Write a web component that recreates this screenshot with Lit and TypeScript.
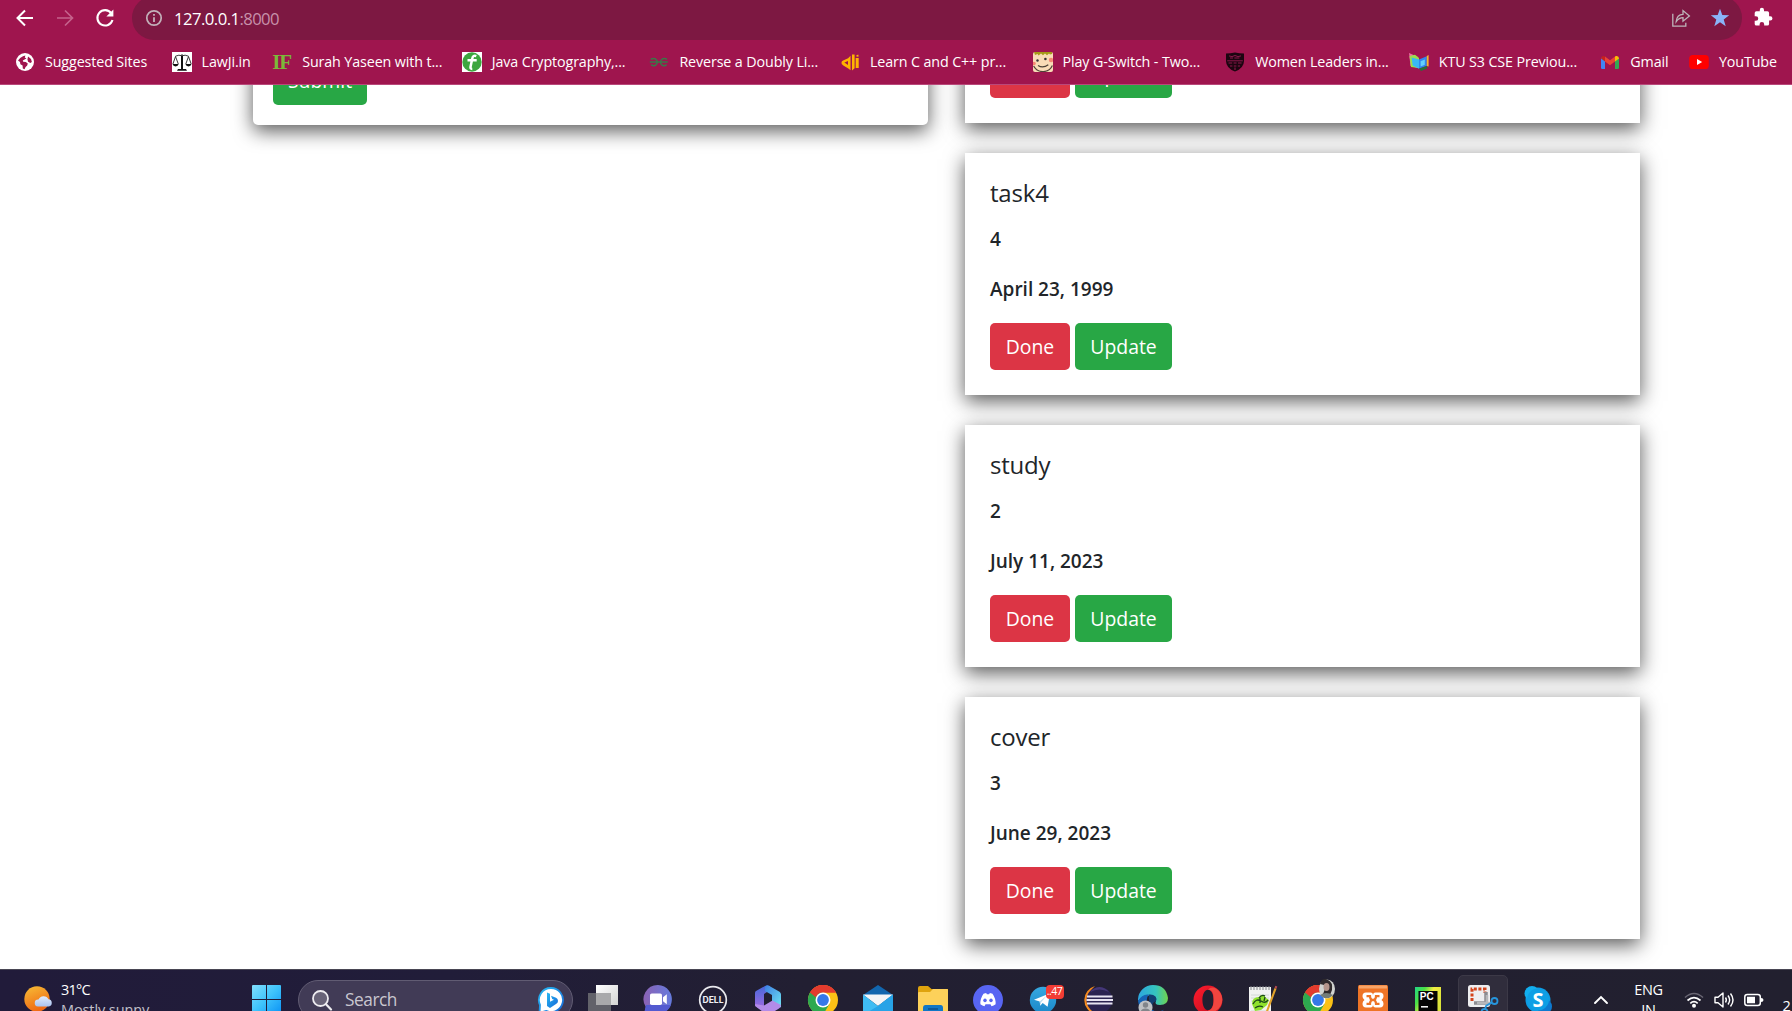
import { LitElement, html, svg, css } from "lit";
import { customElement, property } from "lit/decorators.js";

const icon = (size: number, body: unknown, box = 32) =>
  html`<svg class="icon" width=${size} height=${size} viewBox="0 0 ${box} ${box}" aria-hidden="true">${body}</svg>`;

/* ---------- bookmark favicons, 20 x 20 ---------- */
const globe = svg`<circle cx="10" cy="10" r="9" fill="#fff"/><path d="M3 8.5 5.2 6 8 4.2 10.4 3.6 9.8 5.6 11.4 6.4 9.6 7.6 7.8 8.4 8.2 9.8 10.8 10 12.8 11.4 12.2 13.6 10.4 15.2 9.6 17.2 7.8 16.4 7.6 13.6 5.4 12.2 5 10z" fill="#9f154e"/><path d="m13 4.6 3 2.4.9 3-1.6 1-2.2-1.3-.6-2.1z" fill="#9f154e"/>`;
const scales = svg`<path d="M0 0h20v20H0z" fill="#fff"/><path d="M10 2v15M3.5 4.2Q7 2.4 10 3.8 13 2.4 16.5 4.2M3.5 4.5.9 12M3.5 4.5 6.3 12M16.5 4.5 13.8 12M16.5 4.5 19.2 12" stroke="#222" stroke-width=".9" fill="none"/><path d="M9 4h2v13H9zM.5 12h6.2q-.6 2.4-3.1 2.4T.5 12zM13.4 12h6.1q-.6 2.4-3 2.4T13.4 12zM6 17h8l1 1.8H5z" fill="#111"/>`;
const letterIF = html`<span class="if">IF</span>`;
const greenT = svg`<path d="M0 0h20v20H0z" fill="#fff"/><circle cx="10" cy="10" r="9.7" fill="#3da63f"/><path d="M14.3 4.1q-3.3-1.3-4 2.4L8.5 15q-.3 2 1.8 1.9M5.5 8.2h9.2" stroke="#fff" stroke-width="2.5" fill="none"/>`;
const gfg = svg`<path d="M1.8 7.4q2.2-1.6 4.5-.6 2 1.2 2 3.2t-1.8 3.3q-2.6 1.2-4.3-.8M18 7.4q-2.2-1.6-4.5-.6-2 1.2-2 3.2t1.8 3.3q2.6 1.2 4.3-.8M.8 10h18" stroke="#3a7748" stroke-width="1.5" fill="none"/>`;
const jdoodle = svg`<path d="M10.5 3.8v14.5l-2.2-1.8-5-3Q1 12 1.5 10.3q.2-1 1.6-1.7l5-2.3z" fill="#ffb400"/><path d="m8 9-3.6 1.6L8 13z" fill="#9f154e"/><path d="M12 2.5h2.6v13.8L12 18.5zM15.7 6h3v10h-3zM16.2 3.6l2-1.2.5 2-2 .4z" fill="#ffb400"/>`;
const face = svg`<rect width="20" height="20" rx="2" fill="#f9dcb7"/><path d="M1 0h18v2l-2 .6-1-1-2 1.6L12 1.4l-2 1.8-2-1.6-2.5 2L4.6 2 2 3z" fill="#a59b18"/><circle cx="4.5" cy="8.5" r="1.2" fill="#333"/><circle cx="12.4" cy="7" r="1.3" fill="#333"/><circle cx="18" cy="8" r="2.2" fill="#f58672"/><circle cx="1" cy="11.5" r="1.8" fill="#f58672"/><path d="M5 13.5q5 3.2 10.3-.8M.6 14q3.4 6 10 5.5 6 0 8.8-6" stroke="#4c4237" stroke-width="1.2" fill="none"/>`;
const shield = svg`<path d="M1 1.5Q5.5 1.4 10 .4q4.5 1 9 1.1V9q0 7-9 10.6Q1 16 1 9z" fill="#1c0510"/><path d="M4 3.9q3 1.6 6-.4 3 2 6 .4M5 6h3m1.4 0h5M2.2 8.8h15.6" stroke="#8b174a" stroke-width="1" fill="none"/><path d="M3.5 11h3.7M8.6 11h3M13 11h3.6M5 14h2.4M8.8 14h2.6M12.8 14H15M10 15.5v2.4" stroke="#8b174a" stroke-width="1.1" fill="none"/>`;
const book = svg`<path d="M0 1 9 5v11L1.5 14z" fill="#f06aa8"/><path d="M.5 4 6 2.8 10 6v10l-8-1z" fill="#9ade4c"/><path d="m2.6 5.6 7.4 2v9.2l-6.4-3.2z" fill="#39b8f5"/><path d="m10 7.6 7.8-3.4v9.6L10 16.8z" fill="#3286f0"/><path d="m17.8 4 1.8-1v11.6L17.8 14z" fill="#f7b52c"/><path d="m10 16.6 8-2.6.2 2.6L12 19z" fill="#27713a"/><path d="m11.6 9.2 4.2-1.8v5.4l-4.2 1.8z" fill="#64d1fb"/>`;
const gmail = svg`<path d="M1 5.5v10.2q0 1.3 1.3 1.3H5V8.6z" fill="#4285f4"/><path d="M15 8.6V17h2.7q1.3 0 1.3-1.3V5.5z" fill="#34a853"/><path d="M1 6.7q0-2.5 2.2-2.8Q4.2 3.9 5 4.5v5L1 6.6z" fill="#c5221f"/><path d="M5 4.5 10 8.3l5-3.8v5L10 13.2 5 9.5z" fill="#ea4335"/><path d="m15 4.5 1-.5q2.8-.6 3 2.6l-4 2.9z" fill="#fbbc04"/>`;
const youtube = svg`<rect x=".2" y="3" width="19.6" height="14" rx="3.6" fill="red"/><path d="m8 7 5.2 3L8 13z" fill="#fff"/>`;

interface Bookmark { label: string; width: number; art: unknown; text?: boolean }
const bookmarks: Bookmark[] = [
  { label: "Suggested Sites", width: 106, art: globe },
  { label: "LawJi.in", width: 50, art: scales },
  { label: "Surah Yaseen with t...", width: 139, art: letterIF, text: true },
  { label: "Java Cryptography,...", width: 137, art: greenT },
  { label: "Reverse a Doubly Li...", width: 140, art: gfg },
  { label: "Learn C and C++ pr...", width: 142, art: jdoodle },
  { label: "Play G-Switch - Two...", width: 142, art: face },
  { label: "Women Leaders in...", width: 133, art: shield },
  { label: "KTU S3 CSE Previou...", width: 141, art: book },
  { label: "Gmail", width: 38, art: gmail },
  { label: "YouTube", width: 58, art: youtube },
];

@customElement("browser-bar")
export class BrowserBar extends LitElement {
  static styles = css`
    :host { display: block; background: #9f154e; border-bottom: 1px solid #b9487a; color: #fff; flex: none; height: 84px; overflow: hidden; font-family: "Open Sans", "Noto Sans", sans-serif; }
    .tools { display: flex; align-items: center; height: 44px; margin-top: -4px; }
    .nav { display: flex; align-items: center; gap: 20px; width: 132px; padding-left: 15px; box-sizing: border-box; flex: none; padding-bottom: 4px; margin-top: 4px;}
    .pill { flex: 1; display: flex; align-items: center; height: 44px; border-radius: 22px; background: #7d1842; padding: 0 12px; box-sizing: border-box; }
    .url { margin-left: 10px; font-size: 16.7px; letter-spacing: -0.55px; white-space: nowrap; }
    .port { color: #c791aa; letter-spacing: -0.6px; }
    .spacer { flex: 1; }
    .share { margin-right: 19px; }
    .ext { width: 50px; display: flex; padding-left: 11px; box-sizing: border-box; flex: none; }
    .icon { display: block; flex: none; }
    .marks { display: flex; align-items: center; gap: 20.6px; height: 44px; padding-left: 15px; }
    .mark { display: flex; align-items: center; gap: 10px; flex: none; }
    .label { font-size: 14.3px; line-height: 20px; letter-spacing: -0.12px; white-space: nowrap; }
    .if { width: 20px; font: bold 21px/20px "Liberation Serif", serif; color: #7cb83a; letter-spacing: -1px; }
  `;
  render() {
    return html`
      <div class="tools">
        <div class="nav">
          ${icon(20, svg`<path d="M18 10H3M10 2.5 2.5 10l7.5 7.5" stroke="#fff" stroke-width="2" fill="none"/>`, 20)}
          ${icon(20, svg`<path d="M2 10h15M10 2.5l7.5 7.5-7.5 7.5" stroke="#c5628c" stroke-width="1.7" fill="none"/>`, 20)}
          ${icon(20, svg`<path d="M16.2 5.1A7.7 7.7 0 1 0 17.5 12" stroke="#fff" stroke-width="2.1" fill="none"/><path d="M18.4 1.6v7h-7z" fill="#fff"/>`, 20)}
        </div>
        <div class="pill">
          ${icon(20, svg`<circle cx="10" cy="10" r="7.2" stroke="#c3b1ba" stroke-width="1.7" fill="none"/><path d="M9.1 9.2h1.8V14H9.1zM9.1 6h1.8v1.8H9.1z" fill="#c3b1ba"/>`, 20)}
          <span class="url">127.0.0.1<span class="port">:8000</span></span>
          <span class="spacer"></span>
          <span class="share">${icon(20, svg`<path d="M1.8 5.8v12.4h13v-3.4M5.2 13.6Q5.8 6.5 12 6.3V2.6L18.4 8 12 13.2V9.6Q8 9.6 5.2 13.6z" stroke="#beb5ba" stroke-width="1.3" fill="none"/>`, 20)}</span>
          ${icon(20, svg`<path d="m10 .8 2.3 6.3 6.9.2-5.5 4.2 2 6.7-5.7-3.9-5.7 3.9 2-6.7L.8 7.3l6.9-.2z" fill="#8ab4f8"/>`, 20)}
        </div>
        <div class="ext">${icon(22, svg`<path d="M20.5 11H19V7a2 2 0 0 0-2-2h-4V3.5a2.5 2.5 0 0 0-5 0V5H4a2 2 0 0 0-2 2v3.8h1.5a2.7 2.7 0 0 1 0 5.4H2V20a2 2 0 0 0 2 2h3.8v-1.5a2.7 2.7 0 0 1 5.4 0V22H17a2 2 0 0 0 2-2v-4h1.5a2.5 2.5 0 0 0 0-5z" fill="#fff"/>`, 26)}</div>
      </div>
      <div class="marks">
        ${bookmarks.map(b => html`<div class="mark">${b.text ? b.art : icon(20, b.art, 20)}<span class="label" style="width:${b.width}px">${b.label}</span></div>`)}
      </div>`;
  }
}

@customElement("task-card")
export class TaskCard extends LitElement {
  @property() name = "";
  @property() priority = "";
  @property() date = "";
  static styles = css`
    :host { display: block; box-sizing: border-box; flex: none; height: 242px; padding: 25px; background: #fff; color: #212529; box-shadow: 0 6px 19px rgba(0, 0, 0, 0.65); font-family: "Open Sans", "Noto Sans", sans-serif; }
    .title { margin: 0 0 16px; font-size: 24px; font-weight: 500; line-height: 30px; letter-spacing: -0.2px; -webkit-text-stroke: 0; }
    .line { margin: 0 0 20px; font-size: 19px; font-weight: 600; line-height: 30px; }
    .date { margin-bottom: 19px; }
    .actions { display: flex; gap: 5px; }
    .btn { height: 47px; border-radius: 5px; color: #fff; font-size: 19.4px; line-height: 48px; text-align: center; }
    .done { width: 80px; background: #dc3545; }
    .update { width: 97px; background: #28a745; }
  `;
  render() {
    return html`
      <div class="title">${this.name}</div>
      <div class="line">${this.priority}</div>
      <div class="line date">${this.date}</div>
      <div class="actions"><div class="btn done">Done</div><div class="btn update">Update</div></div>`;
  }
}

/* ---------- taskbar art, 32 x 32 ---------- */
const chrome = svg`<circle cx="16" cy="16" r="15" fill="#fbc116"/><path d="M16 16 3 8.5A15 15 0 0 1 29 8.5H16z" fill="#e33b2e"/><path d="M3 8.5a15 15 0 0 0 13 22.5l6.5-11.3L16 16z" fill="#2da94f"/><path d="M3 8.5 9.5 19.8 16 16V8.5z" fill="#2da94f"/><path d="M3 8.5A15 15 0 0 1 29 8.5H16a7.5 7.5 0 0 0-7 5z" fill="#e33b2e"/><circle cx="16" cy="16" r="7.5" fill="#fff"/><circle cx="16" cy="16" r="5.9" fill="#3578e8"/>`;
const taskview = svg`<defs><linearGradient id="tv" x2="1" y2="1"><stop stop-color="#fff"/><stop offset="1" stop-color="#d3d3d3"/></linearGradient></defs><path d="M1 9h23v22H1z" fill="#62626a"/><path d="M9 1h22v20H9z" fill="url(#tv)"/><path d="M9 9h15v12H9z" fill="#a9a9ab"/>`;
const chat = svg`<defs><linearGradient id="ch" x2="1"><stop stop-color="#8b62b4"/><stop offset="1" stop-color="#657bdd"/></linearGradient></defs><path d="M16 1a14.3 14.3 0 1 1-7 27L2 30l1.8-7A14.3 14.3 0 0 1 16 1z" fill="url(#ch)"/><path d="M4 21h25a14 14 0 0 1-20 7l-7 2z" fill="#535ad0"/><rect x="8" y="9.5" width="12" height="11.5" rx="1.8" fill="#fff"/><path d="m21 13.2 3.8-3v10l-3.8-3z" fill="#fff"/>`;
const dell = svg`<circle cx="16" cy="16" r="13.3" fill="none" stroke="#e9e9ed" stroke-width="1.7"/><text x="16" y="19.2" text-anchor="middle" font-family="Inter" font-weight="700" font-size="8.6" textLength="21" fill="#f1f1f4">DELL</text>`;
const m365 = svg`<defs><linearGradient id="ma" x2="0" y2="1"><stop stop-color="#4568db"/><stop offset="1" stop-color="#a46be1"/></linearGradient><linearGradient id="mb" x2="1" y2="1"><stop stop-color="#3d7fe3"/><stop offset="1" stop-color="#6ee5f3"/></linearGradient></defs><path d="M13 2 4 7q-1 .6-1 2v13l6 3.5 3-1.5V10l6-4V2q-3-1-5 0z" fill="url(#ma)"/><path d="m17 1.8 10.5 6Q29 8.700 29 10.500v13l-9-5V11l-7-4V3q1-2.500 4-1.200z" fill="url(#mb)"/><path d="M3 20q0 2.500 2 3.600L14 30q2 1 4 0l9-5.500q2-1 2-3.500l-8.500-4.500L12 21.500z" fill="#b38be8"/>`;
const mail = svg`<path d="M16 1 31 11v4H1v-4z" fill="#1266ae"/><path d="M1 10.500h30L16 22z" fill="#f4f5f7"/><path d="m1 10.500 15 11.500 15-11.500V31H1z" fill="#3fbcf3"/><path d="M31 10.500V31H1L16 22z" fill="#27a3e7"/>`;
const folder = svg`<path d="M1 4q0-2 2-2h8l3.500 3H31v6H1z" fill="#dfa30d"/><path d="M1 9q0-1 1-1h11l3-3h14q1 0 1 1v25H1z" fill="#fdd15a"/><path d="M6 24q0-3 2.500-3h15q2.500 0 2.500 3v8H6z" fill="#1176c5"/><path d="M11 25h10" stroke="#0b4f8d" stroke-width="1.500"/>`;
const discord = svg`<circle cx="16" cy="16" r="15" fill="#5865f2"/><path d="M11.500 9.800q2-.8 2.700-.8l.6 1.200h2.400l.6-1.200q.7 0 2.700.8 3.500 5 3.100 10.500-2 1.500-4.100 1.900l-1-1.900h-5l-1 1.900q-2.100-.4-4.100-1.900-.4-5.500 3.100-10.500z" fill="#fff"/><ellipse cx="13" cy="16.300" rx="1.700" ry="1.900" fill="#5865f2"/><ellipse cx="19" cy="16.300" rx="1.700" ry="1.900" fill="#5865f2"/>`;
const telegram = svg`<defs><linearGradient id="tg" x2="0" y2="1"><stop stop-color="#36a8e0"/><stop offset="1" stop-color="#1b88c9"/></linearGradient></defs><circle cx="16" cy="16" r="13.200" fill="url(#tg)"/><path d="M7 15.700 23 9.300l-2.400 13.400-4.900-3.600-2.500 2.600-.5-4.300z" fill="#fff"/><path d="m12.700 17.400 7-5.600-5.400 6.200-.9 3.500z" fill="#b9dbee"/>`;
const eclipse = svg`<path d="M13 2A14.500 14.500 0 0 0 13 30 18 18 0 0 1 13 2z" fill="#f68b1f"/><circle cx="17.500" cy="16" r="13" fill="#2b2351"/><path d="M17.500 3a13 13 0 0 1 9.500 5 20 20 0 0 0-19 0 13 13 0 0 1 9.500-5z" fill="#453777"/><path d="M5 12.400h25.500M4.500 16h26.500M5 19.600h25.500" stroke="#e8e4f2" stroke-width="2"/>`;
const edge = svg`<defs><linearGradient id="eg" x2="1"><stop stop-color="#2ca6df"/><stop offset=".6" stop-color="#36c5be"/><stop offset="1" stop-color="#71d34b"/></linearGradient></defs><path d="M1 15A15 15 0 0 1 16 1q13 0 15 13 0 7-8 7-6 0-4-4 1-5-5-5.500Q6 11 1 17z" fill="url(#eg)"/><path d="M1 17q4-7.500 11-6.500-3 3-2 8 2 8 10 9 4 0 7-2-5 6-12 5.500Q3 30 1 17z" fill="#1763b5"/><path d="M12 10.500q4-.5 6.500 2 1.500 2 .5 4.500-5 2-3 6-5-3-4-12.500z" fill="#123f72"/><circle cx="8.500" cy="23.500" r="7" fill="#bfc1c4"/><circle cx="8.500" cy="21" r="2.700" fill="#82858a"/><path d="M3.800 28q0-3.500 4.700-3.500T13 28z" fill="#82858a"/>`;
const opera = svg`<defs><linearGradient id="op" x2="1" y2="1"><stop stop-color="#ff1b2d"/><stop offset="1" stop-color="#bd0d1c"/></linearGradient></defs><path d="M16 1.500a14.300 14.300 0 1 0 0 29 14.300 14.300 0 0 0 0-29zm0 4.200c3.300 0 5.600 4.600 5.600 10.300S19.300 26.300 16 26.300 10.400 21.700 10.400 16 12.700 5.700 16 5.700z" fill="url(#op)" fill-rule="evenodd"/><path d="M16 5.700c5 0 5.600 4.600 5.600 10.300S20 26.300 16 26.300q3 3 8 .5 6-3.800 6.300-10.800T24 4.500Q19 2 16 5.700z" fill="#f2453f"/>`;
const notepad = svg`<path d="M2 3h22v28H2z" fill="#f1f2f1"/><path d="M4 2v4M7 2v4M10 2v4M13 2v4M16 2v4M19 2v4M22 2v4" stroke="#83868b"/><path d="M4 11h18M4 14h18M4 17h18M4 27h18" stroke="#cdd3d0" stroke-width=".8"/><path d="M5 20q0-7 7-7 2-3 5-2l2 3 3 2-2 5-6 5-6 1z" fill="#8fe12d"/><path d="M6 20q3-6 8-3 4 3 7-1M8 24q4-3 8-1M12 14q3-4 6-2M13 14v5M18 13l-1 4" stroke="#1b461c" stroke-width="1.300" fill="none"/><path d="m19 27 8.500-23 2 .8L21 27.500l-2 3z" fill="#e1a22a"/><path d="m27.500 4 .8-2.300 2 .8-.8 2.300z" fill="#b34850"/>`;
const chromeUser = svg`${chrome}<ellipse cx="25" cy="5" rx="8" ry="9.500" fill="#d1d3cf"/><path d="M18 0q2-7 8-4 5 2 4 10l-2 5h-8q4-5 2-10z" fill="#302a2b"/><ellipse cx="24.500" cy="3" rx="3" ry="4" fill="#b5958a"/><path d="M18 11q6-4 13 0l-4 3h-5z" fill="#747d78"/>`;
const xampp = svg`<rect x="1" y="1" width="30" height="31" rx="1.500" fill="#ee7426"/><path d="M2 1.500h28v3H2z" fill="#f7a468"/><path d="M9 8.500h4.500q2.500 0 2.500 3 0-3 2.500-3H23q3.500 0 3.500 3.700 0 2.500-2 3.800 2 1.300 2 3.800 0 3.700-3.500 3.700h-4.500q-2.500 0-2.500-3 0 3-2.500 3H9q-3.500 0-3.500-3.700 0-2.500 2-3.800-2-1.300-2-3.800Q5.500 8.500 9 8.500z" fill="#fff"/><path d="M9.500 12.200H13q0 3.800 3 3.800t3-3.800h3.500M9.500 19.800H13q0-3.800 3-3.800t3 3.800h3.500" stroke="#ee7426" stroke-width="2.200" fill="none"/>`;
const pycharm = svg`<defs><linearGradient id="pc" x2="1" y2=".6"><stop stop-color="#21d789"/><stop offset=".3" stop-color="#4be045"/><stop offset=".55" stop-color="#f1ec42"/><stop offset="1" stop-color="#d9e33a"/></linearGradient></defs><path d="M3 3h26v28H3z" fill="url(#pc)"/><path d="M6.500 7h19v20h-19z" fill="#050505"/><text x="7.700" y="15.700" font-family="Liberation Sans" font-weight="700" font-size="10" textLength="14" fill="#fff">PC</text><path d="M9 22.800h7" stroke="#fff" stroke-width="1.500"/>`;
const snip = svg`<rect x="1" y="1" width="22" height="22" rx="2.500" fill="#eeeef0"/><path d="M5 17V5h13v4" stroke="#d3441c" stroke-width="3" stroke-dasharray="3 1.600" fill="none"/><path d="M19 8v11H7" stroke="#8c8c91" stroke-width="3.500" fill="none"/><path d="M20 11v10M10 19h14" stroke="#b6b7ba" stroke-width="2.500"/><circle cx="27.500" cy="17" r="3" fill="none" stroke="#2695dc" stroke-width="1.800"/><circle cx="17.500" cy="28" r="3" fill="none" stroke="#2695dc" stroke-width="1.800"/><path d="m24.700 18.600-5.500 3-1.300 3.700" stroke="#2695dc" stroke-width="1.800" fill="none"/>`;
const skype = svg`<circle cx="16" cy="16" r="12.500" fill="#0d9be3"/><circle cx="10" cy="9.500" r="7.500" fill="#12aeee"/><circle cx="22.500" cy="22.500" r="7.500" fill="#0e79cf"/><circle cx="16" cy="15.500" r="11" fill="#0e9fe5"/><text x="16" y="23" text-anchor="middle" font-family="Open Sans" font-weight="700" font-size="20" fill="#fff">S</text>`;

const apps: { art: unknown; badge?: string; active?: boolean }[] = [
  { art: taskview }, { art: chat }, { art: dell }, { art: m365 }, { art: chrome }, { art: mail },
  { art: folder }, { art: discord }, { art: telegram, badge: "..47" }, { art: eclipse }, { art: edge },
  { art: opera }, { art: notepad }, { art: chromeUser }, { art: xampp }, { art: pycharm },
  { art: snip, active: true }, { art: skype },
];

@customElement("task-bar")
export class TaskBar extends LitElement {
  static styles = css`
    :host { display: block; flex: none; height: 42px; overflow: hidden; background: linear-gradient(90deg, #211b3a, #211d39 25%, #221f32 45%, #22202f); font-family: "Open Sans", "Noto Sans", sans-serif; color: #fff; }
    .bar { display: flex; align-items: center; height: 60px; box-sizing: border-box; border-top: 1px solid #494653; white-space: nowrap; }
    .icon { display: block; flex: none; overflow: visible; }
    .weather { display: flex; align-items: center; width: 251px; padding-left: 23px; box-sizing: border-box; gap: 8px; flex: none; }
    .stack { display: flex; flex-direction: column; font-size: 14.5px; line-height: 20px; letter-spacing: -0.1px; }
    .temp { letter-spacing: -0.8px; }
    .sub { color: #c3c1cb; }
    .start { width: 47px; flex: none; }
    .search { display: flex; align-items: center; width: 275px; height: 40px; box-sizing: border-box; border: 1px solid #615c73; border-radius: 20px; background: #413b56; padding: 0 8px 0 11px; flex: none; }
    .hint { flex: 1; margin-left: 11px; color: #c9c7d0; font-size: 17.300px; letter-spacing: -0.45px; }
    .apps { display: flex; margin-left: 2.500px; }
    .app { position: relative; display: flex; align-items: center; justify-content: center; width: 55px; height: 50px; }
    .active::before { content: ""; position: absolute; inset: 0 2.500px; border-radius: 5px; border: 1px solid #3c3947; background: #302d3c; box-sizing: border-box; }
    .active .icon { position: relative; }
    .badge { position: absolute; left: 30px; top: 10px; width: 18px; height: 14px; border-radius: 4px; background: #f23c34; font-size: 10.500px; line-height: 13px; text-align: center; letter-spacing: -0.5px; }
    .tray { flex: 1; display: flex; align-items: center; }
    .lang { width: 46px; text-align: center; font-size: 14.500px; line-height: 20px; margin: 0 12px 0 15px; letter-spacing: -0.300px; }
    .caret { margin-left: 25px; }
    .tray .wifi { margin-right: 10px; }
    .clock { margin-left: 19px; font-size: 14.500px; padding-top: 11px; }
  `;
  render() {
    return html`<div class="bar">
      <div class="weather">
        ${icon(30, svg`<defs><linearGradient id="su" x2=".4" y2="1"><stop stop-color="#f7be36"/><stop offset="1" stop-color="#f06a14"/></linearGradient><linearGradient id="cl" x2="0" y2="1"><stop stop-color="#e3edfc"/><stop offset="1" stop-color="#a9c3f0"/></linearGradient></defs><circle cx="14" cy="14" r="12.700" fill="url(#su)"/><path d="M15 21.500a3.500 3.500 0 0 1 .5-7 5.500 5.500 0 0 1 10-.3 3.700 3.700 0 0 1 .3 7.300z" fill="url(#cl)"/>`, 30)}
        <div class="stack"><span class="temp">31°C</span><span class="sub">Mostly sunny</span></div>
      </div>
      <div class="start">${icon(31, svg`<defs><linearGradient id="wn" x2="1" y2="1" gradientUnits="userSpaceOnUse"><stop stop-color="#7ce0ff"/></linearGradient><linearGradient id="w2" x1="0" y1="0" x2="31" y2="31" gradientUnits="userSpaceOnUse"><stop stop-color="#86e0fd"/><stop offset=".5" stop-color="#3ec3fb"/><stop offset="1" stop-color="#078ef5"/></linearGradient></defs><path d="M1 2q0-1 1-1h13v14H1zM16 1h13q1 0 1 1v13H16zM1 16h14v14H2q-1 0-1-1zM16 16h14v13q0 1-1 1H16z" fill="url(#w2)"/>`, 31)}</div>
      <div class="search">
        ${icon(24, svg`<circle cx="10.500" cy="10.500" r="7.500" fill="#686378" stroke="#eeedf1" stroke-width="1.800"/><path d="m16 16.200 5 5.300" stroke="#eeedf1" stroke-width="2.200" stroke-linecap="round"/>`, 24)}
        <span class="hint">Search</span>
        ${icon(26, svg`<defs><linearGradient id="bi" x2="1" y2="1"><stop stop-color="#27b9f2"/><stop offset="1" stop-color="#1767d8"/></linearGradient></defs><path d="M13 1a12 12 0 1 1-5 22.900L1.500 26 2 18A12 12 0 0 1 13 1z" fill="#fff" stroke="url(#bi)" stroke-width="1.800"/><path d="m9 5.500 3 1.300v8l4-2-1.800-.8-1.200-3.300 5 2q2 1 2 3.300 0 2-2 3L12 21l-3-2z" fill="url(#bi)"/>`, 26)}
      </div>
      <div class="apps">
        ${apps.map(a => html`<div class="app ${a.active ? "active" : ""}">${icon(32, a.art)}${a.badge ? html`<span class="badge">${a.badge}</span>` : null}</div>`)}
      </div>
      <div class="tray">
        <span class="caret">${icon(20, svg`<path d="m4 13 6-6 6 6" stroke="#fff" stroke-width="1.900" fill="none" stroke-linecap="round"/>`, 20)}</span>
        <div class="lang">ENG<br />IN</div>
        <span class="wifi">${icon(20, svg`<path d="M1 7.500Q10-.5 19 7.500" stroke="#696673" stroke-width="1.600" fill="none"/><path d="M3.500 10.500q6.500-5.700 13 0M6.300 13.300q3.700-3.200 7.400 0" stroke="#fff" stroke-width="1.700" fill="none"/><circle cx="10" cy="15.800" r="2" fill="#fff"/>`, 20)}</span>
        <span class="wifi">${icon(20, svg`<path d="M1 7.300h3L9 3v14l-5-4.300H1z" stroke="#fff" stroke-width="1.400" fill="none" stroke-linejoin="round"/><path d="M11.500 7.500q1.700 2.500 0 5M14 5.500q3.300 4.500 0 9M16.500 3.500q5 6.500 0 13" stroke="#fff" stroke-width="1.400" fill="none"/>`, 20)}</span>
        ${icon(20, svg`<rect x=".8" y="4.500" width="15.500" height="11" rx="2.500" stroke="#fff" stroke-width="1.500" fill="none"/><path d="M3 6.700h8v6.600H3zM17 8q2.500 0 2.500 2T17 12z" fill="#fff"/>`, 20)}
        <span class="clock">2</span>
      </div>
    </div>`;
  }
}

@customElement("app-root")
export class AppRoot extends LitElement {
  static styles = css`
    :host { display: flex; flex-direction: column; height: 1011px; width: 1792px; overflow: hidden; background: #fff; font-family: "Open Sans", "Noto Sans", sans-serif; }
    .page { flex: 1; min-height: 0; overflow: hidden; display: flex; align-items: flex-start; gap: 37px; padding-left: 253px; }
    .form { width: 675px; height: 240px; margin-top: -200px; box-sizing: border-box; padding: 20px; border-radius: 5px; background: #fff; box-shadow: 0 6px 19px rgba(0, 0, 0, 0.65); display: flex; align-items: flex-end; flex: none; }
    .submit { width: 94px; height: 47px; border-radius: 5px; background: #28a745; color: #fff; font-size: 19.400px; line-height: 46px; text-align: center; }
    .tasks { width: 675px; margin-top: -204px; display: flex; flex-direction: column; gap: 30px; flex: none; }
  `;
  render() {
    return html`
      <browser-bar></browser-bar>
      <div class="page">
        <div class="form"><div class="submit">Submit</div></div>
        <div class="tasks">
          <task-card name="task3" priority="3" date="April 23, 1999"></task-card>
          <task-card name="task4" priority="4" date="April 23, 1999"></task-card>
          <task-card name="study" priority="2" date="July 11, 2023"></task-card>
          <task-card name="cover" priority="3" date="June 29, 2023"></task-card>
        </div>
      </div>
      <task-bar></task-bar>`;
  }
}
